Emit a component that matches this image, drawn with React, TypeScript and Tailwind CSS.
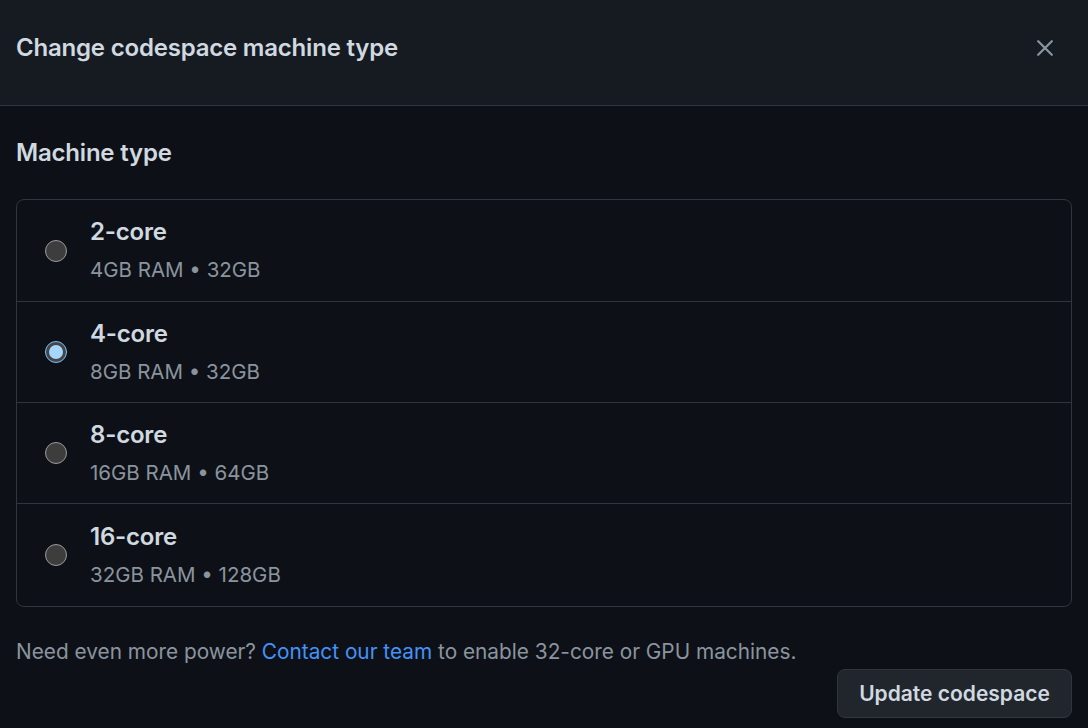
import { useState } from 'react';

type Machine = {
  id: string;
  name: string;
  ram: string;
  storage: string;
};

const machines: Machine[] = [
  { id: 'basicLinux32gb', name: '2-core', ram: '4GB RAM', storage: '32GB' },
  { id: 'standardLinux32gb', name: '4-core', ram: '8GB RAM', storage: '32GB' },
  { id: 'premiumLinux', name: '8-core', ram: '16GB RAM', storage: '64GB' },
  { id: 'largePremiumLinux', name: '16-core', ram: '32GB RAM', storage: '128GB' },
];

function Radio({ checked }: { checked: boolean }) {
  if (checked) {
    return (
      <span className="flex h-[22px] w-[22px] shrink-0 items-center justify-center rounded-full border border-[#79c0ff] bg-[#454545]">
        <span className="h-[14px] w-[14px] rounded-full bg-[#a5d6ff]" />
      </span>
    );
  }
  return (
    <span className="h-[22px] w-[22px] shrink-0 rounded-full border-[1.5px] border-[#9a9a9a] bg-[#3d3d3d]" />
  );
}

export default function App() {
  const [selected, setSelected] = useState('standardLinux32gb');

  return (
    <div
      className="flex h-[728px] w-[1088px] flex-col overflow-hidden bg-[#0d1117] text-[#d1d9e0]"
      style={{ fontFamily: 'Inter, "Noto Sans", sans-serif' }}
    >
      <header className="flex h-[106px] shrink-0 items-start justify-between border-b border-[#30363d] bg-[#161b22] px-4 pt-[32px]">
        <h1 className="text-[24px] font-semibold leading-[32px] tracking-[-0.2px]">
          Change codespace machine type
        </h1>
        <button type="button" aria-label="Close" className="mr-[19px] mt-[8px] text-[#8b949e]">
          <svg width="16" height="16" viewBox="0 0 16 16" fill="none" stroke="currentColor" strokeWidth="2.2" strokeLinecap="round">
            <path d="M1.2 1.2 14.8 14.8M14.8 1.2 1.2 14.8" />
          </svg>
        </button>
      </header>

      <main className="flex flex-col px-4">
        <h2 className="mt-[32px] text-[24px] font-semibold leading-[30px] tracking-[-0.2px]">Machine type</h2>

        <div className="mt-[31px] overflow-hidden rounded-lg border border-[#30363d]">
          {machines.map((m, i) => (
            <button
              key={m.id}
              type="button"
              onClick={() => setSelected(m.id)}
              className={`flex w-full items-center gap-[23px] pl-[28px] text-left ${
                i > 0 ? 'border-t border-[#30363d]' : ''
              } ${i === machines.length - 1 ? 'h-[103px]' : 'h-[101px]'}`}
            >
              <Radio checked={selected === m.id} />
              <div className="flex flex-col">
                <span className="text-[24px] font-semibold leading-[28px] tracking-[-0.2px]">{m.name}</span>
                <span className="mt-[11px] text-[20.5px] leading-[26px] text-[#8b949e]">
                  {m.ram} • {m.storage}
                </span>
              </div>
            </button>
          ))}
        </div>

        <p className="mt-[31px] text-[20.8px] leading-[28px] text-[#8b949e]">
          Need even more power?{' '}
          <a href="#" className="text-[#4493f8]">
            Contact our team
          </a>{' '}
          to enable 32-core or GPU machines.
        </p>

        <div className="mt-[3px] flex justify-end">
          <button
            type="button"
            className="h-[49px] w-[235px] rounded-lg border border-[#30363d] bg-[#21262d] text-[21px] font-semibold text-[#d1d9e0]"
          >
            Update codespace
          </button>
        </div>
      </main>
    </div>
  );
}
